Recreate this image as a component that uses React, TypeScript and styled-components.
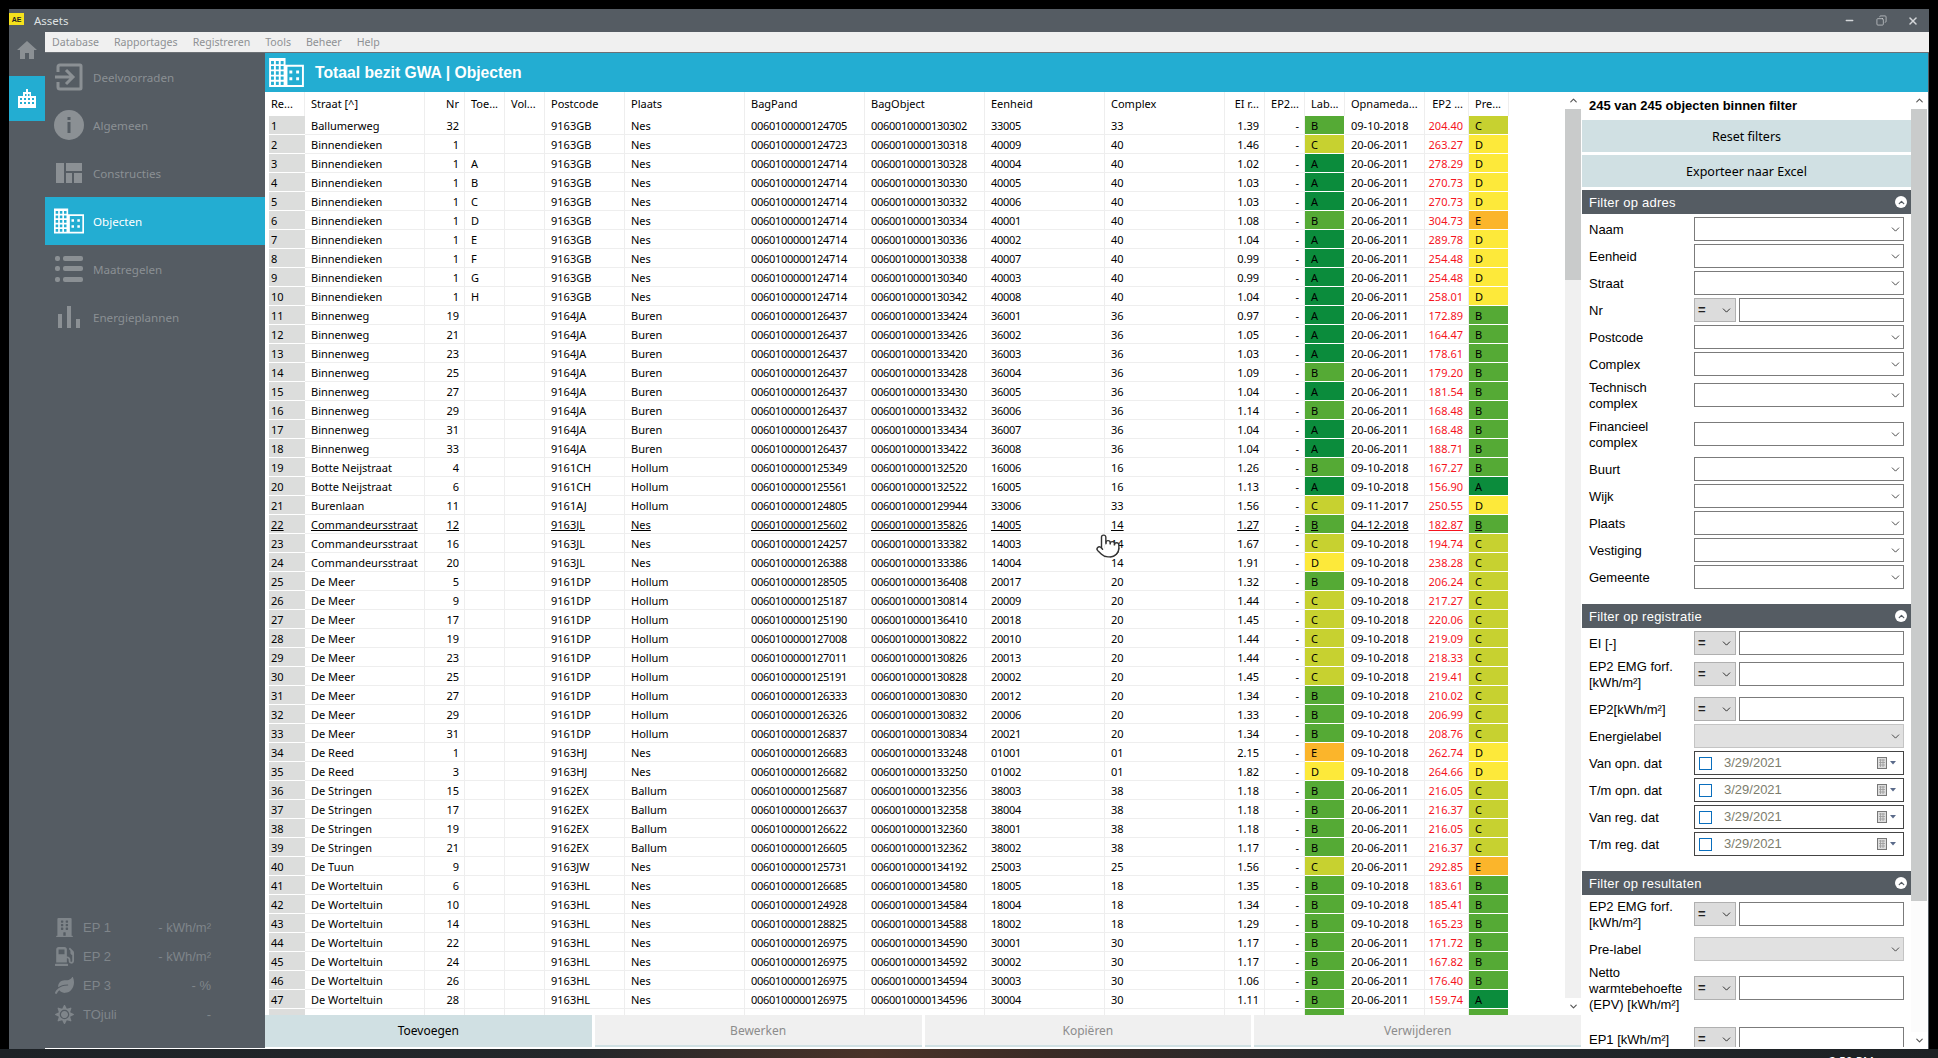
import React from "react";
import styled, { createGlobalStyle } from "styled-components";
import { ChevronDown, ChevronUp, Copy, Minus, Pointer, X } from "lucide-react";
import { FaBuilding, FaGasPump, FaLeaf, FaSun } from "react-icons/fa";

const SIDE = "#555c63";
const TEAL = "#23add2";
const MUTED = "#8b9094";

const Global = createGlobalStyle`
  html, body { margin: 0; padding: 0; background: #000; overflow: hidden; }
  * { box-sizing: border-box; }
  body { font-family: "Noto Sans", "Liberation Sans", sans-serif; }
`;

const Root = styled.div`
  width: 1938px; height: 1058px; background: #000; padding-top: 9px;
  display: flex; flex-direction: column; overflow: hidden;
`;
const Win = styled.div`
  width: 1920px; height: 1040px; margin-left: 9px; background: ${SIDE};
  display: flex; flex-direction: column; flex: none;
`;
const TitleBar = styled.div`
  height: 23px; display: flex; align-items: center; color: #dfe1e2; font-size: 11.5px; flex: none;
`;
const Logo = styled.div`
  width: 15px; height: 12px; background: #f6e21c; color: #222; font: bold 7px "Liberation Sans", sans-serif;
  display: flex; align-items: center; justify-content: center; margin: 0 10px 3px 0;
`;
const AppName = styled.span` flex: 1; `;
const WinBtn = styled.span`
  width: 32px; height: 23px; display: flex; align-items: center; justify-content: center; color: #d4d6d9;
`;
const Body = styled.div` flex: 1; display: flex; min-height: 0; `;
const Rail = styled.div` width: 36px; flex: none; display: flex; flex-direction: column; `;
const RailHome = styled.div` height: 44px; display: flex; justify-content: center; padding-top: 9px; color: ${MUTED}; `;
const RailTile = styled.div` height: 45px; background: ${TEAL}; color: #fff; display: flex; align-items: center; justify-content: center; `;
const Main = styled.div` flex: 1; display: flex; flex-direction: column; min-width: 0; `;
const Menu = styled.div`
  height: 21px; background: #f0f0f0; border-bottom: 1px solid #6b7075; display: flex; align-items: center;
  gap: 15px; padding-left: 7px; color: #8e9194; font-size: 10.6px; flex: none;
`;
const Content = styled.div` flex: 1; display: flex; min-height: 0; `;
const Nav = styled.nav`
  width: 220px; flex: none; display: flex; flex-direction: column; justify-content: space-between;
  border-bottom: 1px solid #fff;
`;
const NavList = styled.div` display: flex; flex-direction: column; `;
const NavItem = styled.div<{ $active?: boolean }>`
  height: 48px; display: flex; align-items: center; padding-left: 9px; gap: 9px; font-size: 11.6px;
  color: ${(p) => (p.$active ? "#fff" : MUTED)};
  background: ${(p) => (p.$active ? TEAL : "transparent")};
`;
const NavIcon = styled.span` width: 30px; display: flex; align-items: center; justify-content: center; `;
const Stats = styled.div` display: flex; flex-direction: column; padding-bottom: 19px; `;
const Stat = styled.div`
  height: 29px; display: flex; align-items: center; padding: 0 54px 0 10px; color: #7f858a;
  font: 13px "Liberation Sans", sans-serif;
`;
const StatIcon = styled.span` width: 19px; margin-right: 9px; display: flex; justify-content: center; font-size: 19px; `;
const StatName = styled.span` flex: 1; `;

const Work = styled.div` flex: 1; min-width: 0; display: flex; flex-direction: column; background: #fff; margin-right: 1px; `;
const Header = styled.div`
  height: 39px; flex: none; background: ${TEAL}; color: #fff; display: flex; align-items: center;
  padding-left: 4px; gap: 11px;
`;
const HeaderTitle = styled.h1` margin: 0; font: bold 15.7px "Liberation Sans", sans-serif; `;
const WorkBody = styled.div` flex: 1; display: flex; min-height: 0; `;
const GridArea = styled.div` width: 1316px; flex: none; display: flex; flex-direction: column; padding-bottom: 2px; `;
const GridWrap = styled.div` flex: 1; display: flex; min-height: 0; `;
const TableWrap = styled.div` width: 1300px; flex: none; position: relative; overflow: hidden; background: #fff; color: #000; `;
const HeadRow = styled.div` display: grid; grid-template-columns: var(--cols); height: 24px; `;
const HeadCell = styled.div<{ $right?: boolean }>`
  display: flex; align-items: center; padding: 0 5px 2px 6px; font-size: 11px; white-space: nowrap;
  border-right: 1px solid #eee; justify-content: ${(p) => (p.$right ? "flex-end" : "flex-start")};
`;
const Row = styled.div` display: grid; grid-template-columns: var(--cols); height: 19px; `;
const RowHead = styled.div<{ $under?: boolean }>`
  margin-left: 4px; background: #dcdddc; padding-left: 2px; font-size: 11px; display: flex; align-items: center;
  border-bottom: 1px solid #fff; text-decoration: ${(p) => (p.$under ? "underline" : "none")};
`;
const Cell = styled.div<{ $right?: boolean; $tight?: boolean; $bg?: string; $red?: boolean; $under?: boolean }>`
  display: flex; align-items: center; padding: 0 5px 0 6px; font-size: 11px; white-space: nowrap;
  justify-content: ${(p) => (p.$right ? "flex-end" : "flex-start")};
  letter-spacing: ${(p) => (p.$tight ? "-0.29px" : "0")};
  color: ${(p) => (p.$red ? "#f5141e" : "#000")};
  background: ${(p) => p.$bg ?? "transparent"};
  border-right: 1px solid ${(p) => (p.$bg ? "#fff" : "#eee")};
  border-bottom: 1px solid ${(p) => (p.$bg ? "#fff" : "#eee")};
  text-decoration: ${(p) => (p.$under ? "underline" : "none")};
`;
const HandCursor = styled.span` position: absolute; left: 830px; top: 441px; display: block; line-height: 0; `;

const Scroll = styled.div<{ $track: string }>`
  width: 16px; flex: none; background: ${(p) => p.$track}; display: flex; flex-direction: column; color: #555;
`;
const ScrollCap = styled.div`
  height: 17px; display: flex; align-items: center; justify-content: center; background: #fff; flex: none;
`;
const ScrollThumb = styled.div<{ $h: number }>` height: ${(p) => p.$h}px; background: #c9cbcb; flex: none; `;
const ScrollFill = styled.div` flex: 1; `;

const ButtonBar = styled.div` height: 32px; flex: none; display: grid; grid-template-columns: repeat(4, 1fr); gap: 3px; `;
const ActionBtn = styled.button<{ $primary?: boolean }>`
  border: 0; padding: 0; font: 12px "Noto Sans", sans-serif;
  background: ${(p) => (p.$primary ? "#d0e0e3" : "#f0f0f0")};
  color: ${(p) => (p.$primary ? "#000" : "#8c8c8c")};
  border-bottom: 2px solid #d0e0e3;
`;

const Panel = styled.aside` flex: 1; display: flex; min-width: 0; overflow: hidden; background: #fff; `;
const PanelBody = styled.div` width: 330px; flex: none; padding-left: 1px; height: 955px; overflow: hidden; color: #000; `;
const PanelTitle = styled.div`
  height: 28px; padding: 0 0 2px 7px; display: flex; align-items: center; font: bold 13px "Liberation Sans", sans-serif;
`;
const FilterBtn = styled.button`
  display: block; width: 329px; height: 32px; margin-bottom: 3px; border: 0; background: #d0e0e3; color: #000;
  font: 12.5px "Noto Sans", sans-serif;
`;
const Section = styled.section<{ $gap?: number }>` margin-top: ${(p) => p.$gap ?? 0}px; `;
const SectionHead = styled.div`
  height: 24px; background: ${SIDE}; color: #fff; display: flex; align-items: center; justify-content: space-between;
  padding: 0 4px 0 7px; font: 13px "Liberation Sans", sans-serif; letter-spacing: 0.25px;
`;
const Collapse = styled.span`
  width: 12px; height: 12px; border-radius: 50%; background: #fff; color: ${SIDE}; display: flex; align-items: center; justify-content: center;
`;
const FilterRow = styled.div<{ $mt?: number }>`
  height: 24px; margin-top: ${(p) => p.$mt ?? 3}px; display: flex; align-items: center; padding-left: 7px;
  font: 13px/16px "Liberation Sans", sans-serif;
`;
const Label = styled.label` width: 100px; margin-right: 5px; padding-top: 2px; flex: none; `;
const Control = styled.div<{ $disabled?: boolean }>`
  width: 210px; height: 24px; border: 1px solid ${(p) => (p.$disabled ? "#c4c4c4" : "#7b7b7b")};
  background: ${(p) => (p.$disabled ? "#e1e1e1" : "#fff")}; display: flex; align-items: center; justify-content: flex-end;
  padding-right: 1px; color: #3c3c3c;
`;
const Op = styled.div`
  width: 42px; height: 24px; border: 1px solid #b0b0b0; background: #dcdcdc; display: flex; align-items: center;
  justify-content: space-between; padding: 0 2px 0 3px; margin-right: 3px; font-weight: bold; color: #222; flex: none;
`;
const TextBox = styled.div` width: 165px; height: 24px; border: 1px solid #7b7b7b; background: #fff; flex: none; `;
const DateBox = styled.div`
  width: 210px; height: 24px; border: 1px solid #444; background: #fff; display: flex; align-items: center;
  padding: 0 6px 0 4px; color: #7c7c6c;
`;
const Check = styled.span` width: 13px; height: 13px; border: 1px solid #0a6ebd; margin-right: 12px; flex: none; `;
const DateText = styled.span` flex: 1; `;

const COLS = "40px 120px 40px 40px 40px 80px 120px 120px 120px 120px 120px 40px 40px 40px 80px 44px 40px";
const LABEL: Record<string, string> = { A: "#0b8c3c", B: "#55aa35", C: "#c7d130", D: "#fde93a", E: "#fbb52b" };

const RAW = `Ballumerweg|32||9163GB|Nes|124705|130302|33005|33|1.39|B|09-10-2018|204.40|C
Binnendieken|1||9163GB|Nes|124723|130318|40009|40|1.46|C|20-06-2011|263.27|D
Binnendieken|1|A|9163GB|Nes|124714|130328|40004|40|1.02|A|20-06-2011|278.29|D
Binnendieken|1|B|9163GB|Nes|124714|130330|40005|40|1.03|A|20-06-2011|270.73|D
Binnendieken|1|C|9163GB|Nes|124714|130332|40006|40|1.03|A|20-06-2011|270.73|D
Binnendieken|1|D|9163GB|Nes|124714|130334|40001|40|1.08|B|20-06-2011|304.73|E
Binnendieken|1|E|9163GB|Nes|124714|130336|40002|40|1.04|A|20-06-2011|289.78|D
Binnendieken|1|F|9163GB|Nes|124714|130338|40007|40|0.99|A|20-06-2011|254.48|D
Binnendieken|1|G|9163GB|Nes|124714|130340|40003|40|0.99|A|20-06-2011|254.48|D
Binnendieken|1|H|9163GB|Nes|124714|130342|40008|40|1.04|A|20-06-2011|258.01|D
Binnenweg|19||9164JA|Buren|126437|133424|36001|36|0.97|A|20-06-2011|172.89|B
Binnenweg|21||9164JA|Buren|126437|133426|36002|36|1.05|A|20-06-2011|164.47|B
Binnenweg|23||9164JA|Buren|126437|133420|36003|36|1.03|A|20-06-2011|178.61|B
Binnenweg|25||9164JA|Buren|126437|133428|36004|36|1.09|B|20-06-2011|179.20|B
Binnenweg|27||9164JA|Buren|126437|133430|36005|36|1.04|A|20-06-2011|181.54|B
Binnenweg|29||9164JA|Buren|126437|133432|36006|36|1.14|B|20-06-2011|168.48|B
Binnenweg|31||9164JA|Buren|126437|133434|36007|36|1.04|A|20-06-2011|168.48|B
Binnenweg|33||9164JA|Buren|126437|133422|36008|36|1.04|A|20-06-2011|188.71|B
Botte Neijstraat|4||9161CH|Hollum|125349|132520|16006|16|1.26|B|09-10-2018|167.27|B
Botte Neijstraat|6||9161CH|Hollum|125561|132522|16005|16|1.13|A|09-10-2018|156.90|A
Burenlaan|11||9161AJ|Hollum|124805|129944|33006|33|1.56|C|09-11-2017|250.55|D
Commandeursstraat|12||9163JL|Nes|125602|135826|14005|14|1.27|B|04-12-2018|182.87|B
Commandeursstraat|16||9163JL|Nes|124257|133382|14003|14|1.67|C|09-10-2018|194.74|C
Commandeursstraat|20||9163JL|Nes|126388|133386|14004|14|1.91|D|09-10-2018|238.28|C
De Meer|5||9161DP|Hollum|128505|136408|20017|20|1.32|B|09-10-2018|206.24|C
De Meer|9||9161DP|Hollum|125187|130814|20009|20|1.44|C|09-10-2018|217.27|C
De Meer|17||9161DP|Hollum|125190|136410|20018|20|1.45|C|09-10-2018|220.06|C
De Meer|19||9161DP|Hollum|127008|130822|20010|20|1.44|C|09-10-2018|219.09|C
De Meer|23||9161DP|Hollum|127011|130826|20013|20|1.44|C|09-10-2018|218.33|C
De Meer|25||9161DP|Hollum|125191|130828|20002|20|1.45|C|09-10-2018|219.41|C
De Meer|27||9161DP|Hollum|126333|130830|20012|20|1.34|B|09-10-2018|210.02|C
De Meer|29||9161DP|Hollum|126326|130832|20006|20|1.33|B|09-10-2018|206.99|C
De Meer|31||9161DP|Hollum|126837|130834|20021|20|1.34|B|09-10-2018|208.76|C
De Reed|1||9163HJ|Nes|126683|133248|01001|01|2.15|E|09-10-2018|262.74|D
De Reed|3||9163HJ|Nes|126682|133250|01002|01|1.82|D|09-10-2018|264.66|D
De Stringen|15||9162EX|Ballum|125687|132356|38003|38|1.18|B|20-06-2011|216.05|C
De Stringen|17||9162EX|Ballum|126637|132358|38004|38|1.18|B|20-06-2011|216.37|C
De Stringen|19||9162EX|Ballum|126622|132360|38001|38|1.18|B|20-06-2011|216.05|C
De Stringen|21||9162EX|Ballum|126605|132362|38002|38|1.17|B|20-06-2011|216.37|C
De Tuun|9||9163JW|Nes|125731|134192|25003|25|1.56|C|20-06-2011|292.85|E
De Worteltuin|6||9163HL|Nes|126685|134580|18005|18|1.35|B|09-10-2018|183.61|B
De Worteltuin|10||9163HL|Nes|124928|134584|18004|18|1.34|B|09-10-2018|185.41|B
De Worteltuin|14||9163HL|Nes|128825|134588|18002|18|1.29|B|09-10-2018|165.23|B
De Worteltuin|22||9163HL|Nes|126975|134590|30001|30|1.17|B|20-06-2011|171.72|B
De Worteltuin|24||9163HL|Nes|126975|134592|30002|30|1.17|B|20-06-2011|167.82|B
De Worteltuin|26||9163HL|Nes|126975|134594|30003|30|1.06|B|20-06-2011|176.40|B
De Worteltuin|28||9163HL|Nes|126975|134596|30004|30|1.11|B|20-06-2011|159.74|A
De Worteltuin|30||9163HL|Nes|126975|134598|30005|30|1.13|B|20-06-2011|167.82|B`;
const ROWS = RAW.split("\n").map((l) => l.split("|"));

const HEADS: [string, boolean][] = [
  ["Re...", false], ["Straat [^]", false], ["Nr", true], ["Toe...", false], ["Vol...", false], ["Postcode", false],
  ["Plaats", false], ["BagPand", false], ["BagObject", false], ["Eenheid", false], ["Complex", false], ["EI r...", true],
  ["EP2...", true], ["Lab...", false], ["Opnameda...", false], ["EP2 ...", true], ["Pre...", false],
];

const buildingPath = (() => {
  const rect = (x: number, y: number, w: number, h: number) => `M${x} ${y}h${w}v${h}h${-w}z`;
  let d = rect(0, 0, 17, 30) + rect(17, 7, 19, 23) + rect(19, 9, 15, 19);
  for (let c = 0; c < 3; c++) for (let r = 0; r < 5; r++) d += rect(2 + c * 5, 3 + r * 5.4, 3, 3.4);
  d += rect(21, 13, 3, 3) + rect(21, 20, 3, 3) + rect(28, 13, 3, 3) + rect(28, 20, 3, 3);
  return d;
})();

const Building = ({ w, h }: { w: number; h: number }) => (
  <svg width={w} height={h} viewBox="0 0 36 30" fill="currentColor"><path fillRule="evenodd" d={buildingPath} /></svg>
);

const NAV: { label: string; icon: React.ReactNode; active?: boolean }[] = [
  {
    label: "Deelvoorraden",
    icon: (
      <svg width="28" height="28" viewBox="0 0 28 28" fill="none" stroke="currentColor" strokeWidth="3">
        <path d="M3 9V4a2 2 0 0 1 2-2h20a1 1 0 0 1 1 1v22a1 1 0 0 1-1 1H5a2 2 0 0 1-2-2v-5" />
        <path d="M0 14h17M11 7l7 7-7 7" />
      </svg>
    ),
  },
  {
    label: "Algemeen",
    icon: (
      <svg width="30" height="30" viewBox="0 0 30 30">
        <circle cx="15" cy="15" r="15" fill="currentColor" />
        <rect x="13.5" y="12" width="3" height="11" fill={SIDE} />
        <rect x="13.5" y="7" width="3" height="3" fill={SIDE} />
      </svg>
    ),
  },
  {
    label: "Constructies",
    icon: (
      <svg width="26" height="20" viewBox="0 0 26 20" fill="currentColor">
        <rect width="8" height="20" /><rect x="10" width="16" height="8" /><rect x="10" y="10" width="6" height="10" /><rect x="18" y="10" width="8" height="10" />
      </svg>
    ),
  },
  { label: "Objecten", icon: <Building w={30} h={26} />, active: true },
  {
    label: "Maatregelen",
    icon: (
      <svg width="28" height="26" viewBox="0 0 28 26" fill="currentColor">
        <rect width="5" height="5" y="0" rx="2" /><rect x="8" width="20" height="5" rx="2" />
        <rect width="5" height="5" y="10" rx="2" /><rect x="8" y="10" width="20" height="5" rx="2" />
        <rect width="5" height="5" y="21" rx="2" /><rect x="8" y="21" width="20" height="5" rx="2" />
      </svg>
    ),
  },
  {
    label: "Energieplannen",
    icon: (
      <svg width="22" height="22" viewBox="0 0 22 22" fill="currentColor">
        <rect y="8" width="4" height="14" /><rect x="9" width="4" height="22" /><rect x="18" y="13" width="4" height="9" />
      </svg>
    ),
  },
];

const Chev = () => <ChevronDown size={13} strokeWidth={1.7} />;

const Sel = ({ label, mt, disabled }: { label: string; mt?: number; disabled?: boolean }) => (
  <FilterRow $mt={mt}>
    <Label>{label}</Label>
    <Control $disabled={disabled}><Chev /></Control>
  </FilterRow>
);
const Num = ({ label, mt }: { label: string; mt?: number }) => (
  <FilterRow $mt={mt}>
    <Label>{label}</Label>
    <Op>=<Chev /></Op>
    <TextBox />
  </FilterRow>
);
const DateRow = ({ label }: { label: string }) => (
  <FilterRow>
    <Label>{label}</Label>
    <DateBox>
      <Check />
      <DateText>3/29/2021</DateText>
      <svg width="20" height="13" viewBox="0 0 20 13">
        <rect x="0.5" y="0.5" width="9" height="11" fill="#ddd" stroke="#777" />
        <path d="M2 3h6M2 5.500h6M2 8h6M3.500 2v8M6 2v8" stroke="#999" strokeWidth="0.8" />
        <path d="M13 4h6l-3 3.500z" fill="#5a6a8a" />
      </svg>
    </DateBox>
  </FilterRow>
);
const SecHead = ({ title }: { title: string }) => (
  <SectionHead>{title}<Collapse><ChevronUp size={9} strokeWidth={3.5} /></Collapse></SectionHead>
);

const Taskbar = styled.div`
  flex: 1; min-height: 0; overflow: hidden; display: flex; align-items: flex-start; padding: 6px 64px 0 0; color: #fff;
  background: linear-gradient(90deg, #1d2226 0%, #23272a 30%, #4a3328 45%, #3a2b25 54%, #23282c 70%, #1d2124 100%);
  font-size: 12px; line-height: 14px; justify-content: flex-end;
`;

export default function App() {
  return (
    <Root style={{ ["--cols" as string]: COLS }}>
      <Global />
      <Win>
        <TitleBar>
          <Logo>AE</Logo>
          <AppName>Assets</AppName>
          <WinBtn><Minus size={11} strokeWidth={3} /></WinBtn>
          <WinBtn><Copy size={11} strokeWidth={1.5} style={{ transform: "scaleX(-1)" }} /></WinBtn>
          <WinBtn><X size={12} strokeWidth={3} /></WinBtn>
        </TitleBar>
        <Body>
          <Rail>
            <RailHome>
              <svg width="20" height="18" viewBox="0 0 20 18" fill="currentColor">
                <path d="M10 0l10 9h-3v9h-5v-6H8v6H3V9H0z" />
              </svg>
            </RailHome>
            <RailTile>
              <svg width="18" height="19" viewBox="0 0 18 19" fill="currentColor">
                <path fillRule="evenodd" d="M8 0h2v3h3v4h5v12H0V7h5V3h3zM7 5v2h1.500V5zM10 5v2h1.500V5zM2 9v2h2V9zM6 9v2h2V9zM10 9v2h2V9zM14 9v2h2V9zM2 13v2h2v-2zM6 13v2h2v-2zM10 13v2h2v-2zM14 13v2h2v-2z" />
              </svg>
            </RailTile>
          </Rail>
          <Main>
            <Menu>
              <span>Database</span><span>Rapportages</span><span>Registreren</span><span>Tools</span><span>Beheer</span><span>Help</span>
            </Menu>
            <Content>
              <Nav>
                <NavList>
                  {NAV.map((n) => (
                    <NavItem key={n.label} $active={n.active}>
                      <NavIcon>{n.icon}</NavIcon>
                      {n.label}
                    </NavItem>
                  ))}
                </NavList>
                <Stats>
                  <Stat><StatIcon><FaBuilding /></StatIcon><StatName>EP 1</StatName>- kWh/m²</Stat>
                  <Stat><StatIcon><FaGasPump /></StatIcon><StatName>EP 2</StatName>- kWh/m²</Stat>
                  <Stat><StatIcon><FaLeaf /></StatIcon><StatName>EP 3</StatName>- %</Stat>
                  <Stat><StatIcon><FaSun /></StatIcon><StatName>TOjuli</StatName>-</Stat>
                </Stats>
              </Nav>
              <Work>
                <Header>
                  <Building w={35} h={29} />
                  <HeaderTitle>Totaal bezit GWA | Objecten</HeaderTitle>
                </Header>
                <WorkBody>
                  <GridArea>
                    <GridWrap>
                      <TableWrap>
                        <HeadRow>
                          {HEADS.map(([h, right], i) => (
                            <HeadCell key={i} $right={right}>{h}</HeadCell>
                          ))}
                        </HeadRow>
                        {ROWS.map((r, i) => {
                          const u = i === 21;
                          return (
                            <Row key={i}>
                              <RowHead $under={u}>{i + 1}</RowHead>
                              <Cell $under={u}>{r[0]}</Cell>
                              <Cell $right $under={u}>{r[1]}</Cell>
                              <Cell>{r[2]}</Cell>
                              <Cell />
                              <Cell $under={u}>{r[3]}</Cell>
                              <Cell $under={u}>{r[4]}</Cell>
                              <Cell $tight $under={u}>{"0060100000" + r[5]}</Cell>
                              <Cell $tight $under={u}>{"0060010000" + r[6]}</Cell>
                              <Cell $tight $under={u}>{r[7]}</Cell>
                              <Cell $under={u}>{r[8]}</Cell>
                              <Cell $right $under={u}>{r[9]}</Cell>
                              <Cell $right $under={u}>-</Cell>
                              <Cell $bg={LABEL[r[10]]} $under={u}>{r[10]}</Cell>
                              <Cell $under={u}>{r[11]}</Cell>
                              <Cell $right $red $under={u}>{r[12]}</Cell>
                              <Cell $bg={LABEL[r[13]]} $under={u}>{r[13]}</Cell>
                            </Row>
                          );
                        })}
                        <HandCursor>
                          <Pointer size={26} fill="#fff" color="#333" strokeWidth={1.3} />
                        </HandCursor>
                      </TableWrap>
                      <Scroll $track="#f0f0f0">
                        <ScrollCap><ChevronUp size={11} strokeWidth={2.5} /></ScrollCap>
                        <ScrollThumb $h={171} />
                        <ScrollFill />
                        <ScrollCap><ChevronDown size={11} strokeWidth={2.5} /></ScrollCap>
                      </Scroll>
                    </GridWrap>
                    <ButtonBar>
                      <ActionBtn $primary>Toevoegen</ActionBtn>
                      <ActionBtn>Bewerken</ActionBtn>
                      <ActionBtn>Kopiëren</ActionBtn>
                      <ActionBtn>Verwijderen</ActionBtn>
                    </ButtonBar>
                  </GridArea>
                  <Panel>
                    <PanelBody>
                      <PanelTitle>245 van 245 objecten binnen filter</PanelTitle>
                      <FilterBtn>Reset filters</FilterBtn>
                      <FilterBtn>Exporteer naar Excel</FilterBtn>
                      <Section>
                        <SecHead title="Filter op adres" />
                        <Sel label="Naam" />
                        <Sel label="Eenheid" />
                        <Sel label="Straat" />
                        <Num label="Nr" />
                        <Sel label="Postcode" />
                        <Sel label="Complex" />
                        <Sel label="Technisch complex" mt={7} />
                        <Sel label="Financieel complex" mt={15} />
                        <Sel label="Buurt" mt={11} />
                        <Sel label="Wijk" />
                        <Sel label="Plaats" />
                        <Sel label="Vestiging" />
                        <Sel label="Gemeente" />
                      </Section>
                      <Section $gap={15}>
                        <SecHead title="Filter op registratie" />
                        <Num label="EI [-]" />
                        <Num label="EP2 EMG forf. [kWh/m²]" mt={7} />
                        <Num label="EP2[kWh/m²]" mt={11} />
                        <Sel label="Energielabel" disabled />
                        <DateRow label="Van opn. dat" />
                        <DateRow label="T/m opn. dat" />
                        <DateRow label="Van reg. dat" />
                        <DateRow label="T/m reg. dat" />
                      </Section>
                      <Section $gap={15}>
                        <SecHead title="Filter op resultaten" />
                        <Num label="EP2 EMG forf. [kWh/m²]" mt={7} />
                        <Sel label="Pre-label" mt={11} disabled />
                        <Num label="Netto warmtebehoefte (EPV) [kWh/m²]" mt={15} />
                        <Num label="EP1 [kWh/m²]" mt={27} />
                      </Section>
                    </PanelBody>
                    <Scroll $track="#fcfcfc">
                      <ScrollCap><ChevronUp size={11} strokeWidth={2.5} /></ScrollCap>
                      <ScrollThumb $h={792} />
                      <ScrollFill />
                      <ScrollCap><ChevronDown size={11} strokeWidth={2.5} /></ScrollCap>
                    </Scroll>
                  </Panel>
                </WorkBody>
              </Work>
            </Content>
          </Main>
        </Body>
      </Win>
      <Taskbar>2:59 PM</Taskbar>
    </Root>
  );
}
